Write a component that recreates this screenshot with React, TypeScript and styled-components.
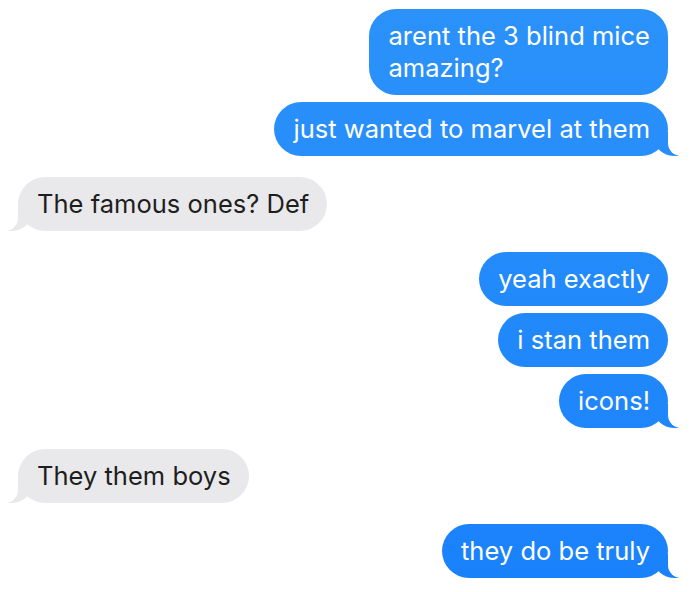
import React from 'react';
import styled, { createGlobalStyle, css } from 'styled-components';

const GlobalStyle = createGlobalStyle`
  html, body {
    margin: 0;
    background: #ffffff;
  }
  body {
    font-family: Inter, "Noto Sans", "Liberation Sans", sans-serif;
  }
`;

const Chat = styled.div`
  display: flex;
  flex-direction: column;
  padding: 9px 24px 10px 18px;
`;

const Bubble = styled.p<{ $me: boolean; $gap: number; $tail: boolean }>`
  position: relative;
  box-sizing: border-box;
  margin: ${(p) => p.$gap}px 0 0;
  max-width: 420px;
  padding: 11px 18px 11px 19px;
  border-radius: 27px;
  font-size: 25.5px;
  letter-spacing: 0.02px;
  line-height: 32px;
  word-wrap: break-word;
  align-self: ${(p) => (p.$me ? 'flex-end' : 'flex-start')};
  ${(p) =>
    p.$me
      ? css`
          color: #ffffff;
          background: linear-gradient(180deg, #2c92fa 0%, #1981fb 100%) fixed;
        `
      : css`
          color: #1e1e1e;
          background: #e9e9eb;
        `}

  ${(p) =>
    p.$tail &&
    css`
      &::before,
      &::after {
        content: '';
        position: absolute;
        bottom: 0;
        height: 24px;
      }
      &::before {
        width: 25px;
        background: inherit;
        ${p.$me
          ? css`
              right: -11px;
              border-bottom-left-radius: 21px 18px;
            `
          : css`
              left: -11px;
              border-bottom-right-radius: 21px 18px;
            `}
      }
      &::after {
        width: 16px;
        background: #ffffff;
        ${p.$me
          ? css`
              right: -16px;
              border-bottom-left-radius: 13px;
            `
          : css`
              left: -16px;
              border-bottom-right-radius: 13px;
            `}
      }
    `}
`;

type Message = { lines: string[]; me: boolean };

const messages: Message[] = [
  { lines: ['arent the 3 blind mice', 'amazing?'], me: true },
  { lines: ['just wanted to marvel at them'], me: true },
  { lines: ['The famous ones? Def'], me: false },
  { lines: ['yeah exactly'], me: true },
  { lines: ['i stan them'], me: true },
  { lines: ['icons!'], me: true },
  { lines: ['They them boys'], me: false },
  { lines: ['they do be truly'], me: true },
];

export default function App() {
  return (
    <>
      <GlobalStyle />
      <Chat>
        {messages.map((m, i) => {
          const prev = messages[i - 1];
          const next = messages[i + 1];
          const gap = i === 0 ? 0 : prev.me === m.me ? 7 : 21;
          const tail = !next || next.me !== m.me;
          return (
            <Bubble key={i} $me={m.me} $gap={gap} $tail={tail}>
              {m.lines.map((line, j) => (
                <React.Fragment key={j}>
                  {j > 0 && <br />}
                  {line}
                </React.Fragment>
              ))}
            </Bubble>
          );
        })}
      </Chat>
    </>
  );
}
